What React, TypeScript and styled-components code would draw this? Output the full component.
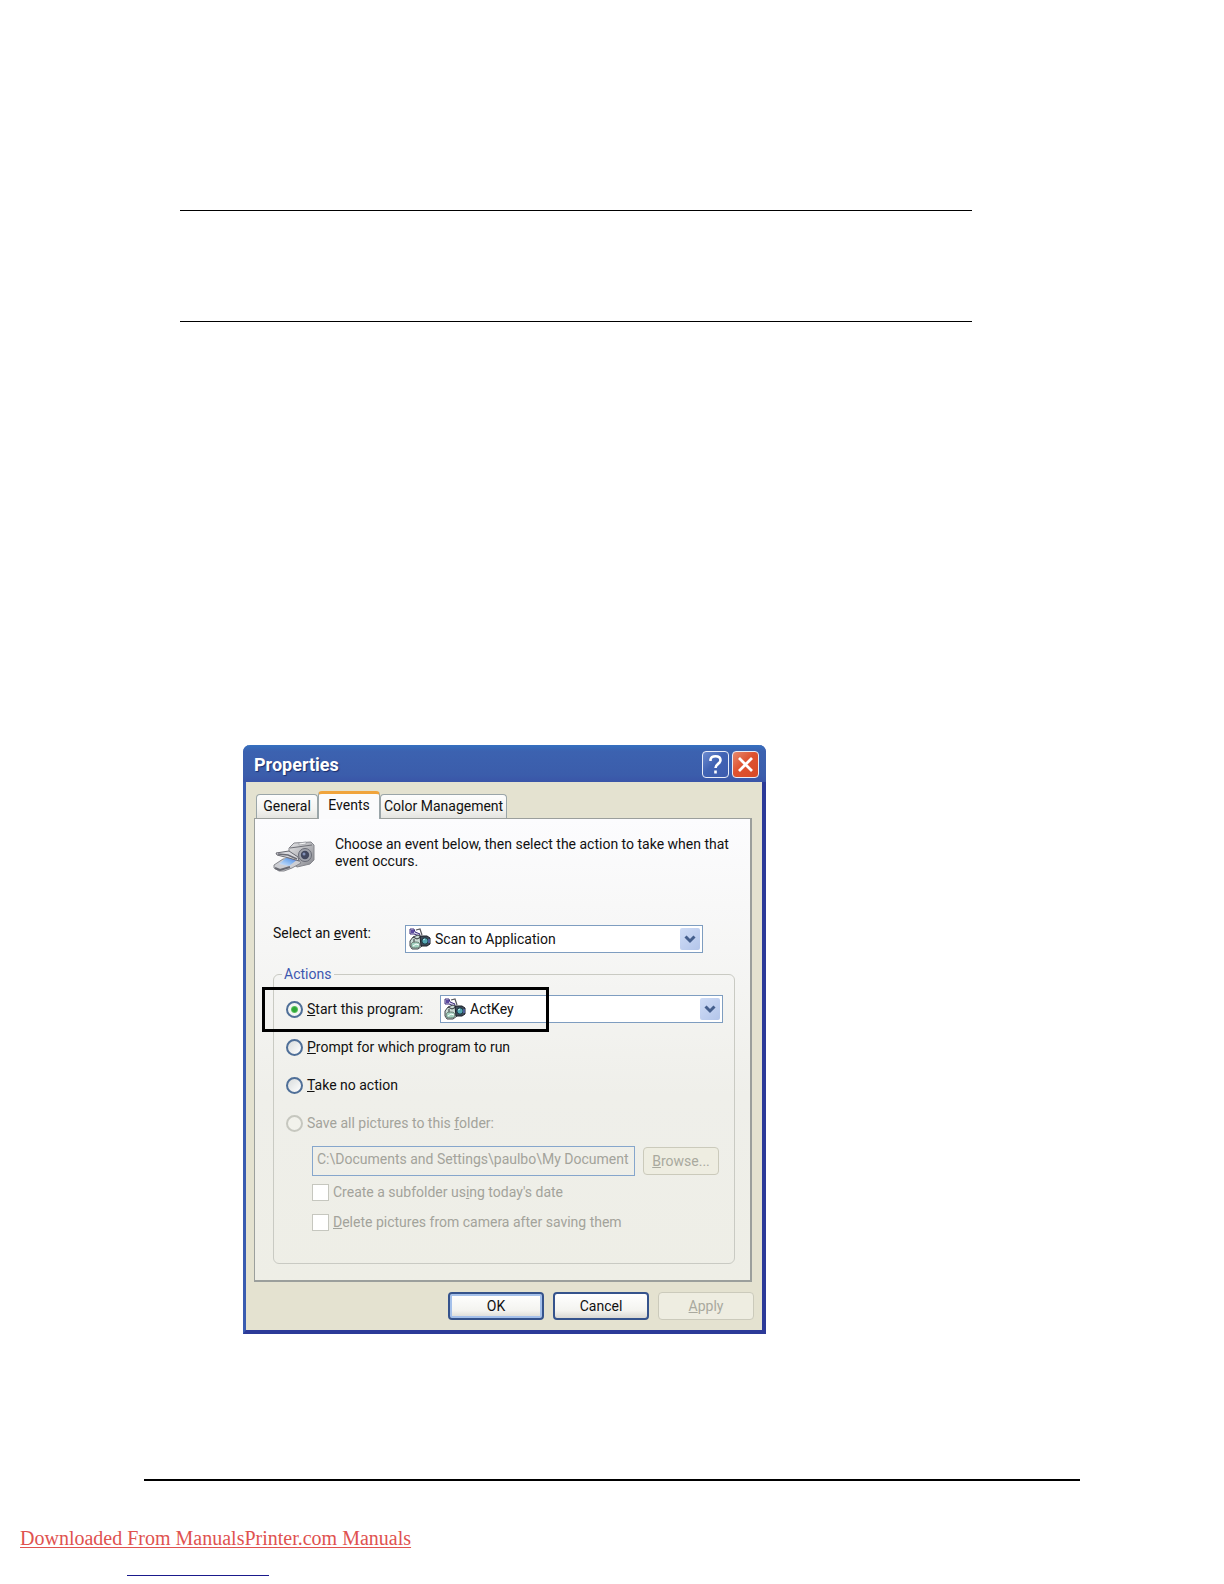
import React, { useState } from "react";
import styled, { createGlobalStyle, css } from "styled-components";

const GlobalStyle = createGlobalStyle`
  * { box-sizing: border-box; }
  body { margin: 0; background: #fff; }
  button, input, select { font: inherit; color: inherit; margin: 0; }
`;

const ui = `Roboto, "Liberation Sans", sans-serif`;

const Page = styled.main`
  display: flex;
  flex-direction: column;
  padding: 210px 0 8px;
  font-family: ${ui};
  font-size: 14px;
  line-height: 17px;
  color: #111;
`;

const NoteBox = styled.section`
  height: 112px;
  margin: 0 252px 0 180px;
  border-top: 1px solid #000;
  border-bottom: 1px solid #000;
`;

const Dialog = styled.section`
  width: 523px;
  max-width: 100%;
  margin: 423px 0 0 243px;
  border: solid #3a5cb0;
  border-width: 0 4px 4px 3px;
  border-right-color: #2c3a98;
  border-bottom-color: #2c3a98;
  border-radius: 7px 7px 0 0;
  background: #e4e2d0;
`;

const TitleBar = styled.header`
  display: flex;
  align-items: center;
  gap: 3px;
  height: 37px;
  margin: 0 -4px 0 -3px;
  padding: 2px 7px 0 11px;
  border-radius: 7px 7px 0 0;
  background: linear-gradient(#3570c0 0, #3c62b0 6px, #3b5dab 30px, #3a55a8 100%);
`;

const Title = styled.h1`
  flex: 1;
  margin: 0;
  font-size: 18px;
  line-height: 20px;
  font-weight: 700;
  color: #fff;
  text-shadow: 1px 1px 1px #1c2f6e;
`;

const CaptionButton = styled.button<{ $danger?: boolean }>`
  display: grid;
  place-items: center;
  width: 27px;
  height: 27px;
  padding: 0;
  border: 1px solid #e8ecf8;
  border-radius: 4px;
  background: ${(p) =>
    p.$danger
      ? "linear-gradient(135deg, #e58a70, #de5230 45%, #d84a26)"
      : "linear-gradient(135deg, #6d8cd0, #4163b4 45%, #3d5cae)"};
`;

const Body = styled.div`
  padding: 9px 10px 10px 8px;
`;

const TabList = styled.div`
  display: flex;
  align-items: flex-end;
  height: 27px;
  padding-left: 2px;
`;

const Tab = styled.button<{ $active?: boolean }>`
  height: 24px;
  min-width: 62px;
  padding: 0 3px;
  border: 1px solid #9aa5a8;
  border-bottom: 0;
  border-radius: 4px 4px 0 0;
  background: linear-gradient(#fdfdfd, #f4f4f1 60%, #e4e4e0);
  white-space: nowrap;
  ${(p) =>
    p.$active &&
    css`
      height: 28px;
      margin-bottom: -1px;
      padding-bottom: 3px;
      border-top: 3px solid #f0a43c;
      background: #fbfbfc;
      z-index: 1;
    `}
`;

const Panel = styled.div`
  padding: 17px 15px 16px 18px;
  border: 1px solid #9b9f9c;
  border-right-width: 2px;
  border-bottom-width: 2px;
  background: linear-gradient(#fcfcfe, #f6f6f5 28%, #efefea 60%, #eeeee6);
`;

const Intro = styled.div`
  display: flex;
  gap: 19px;
  height: 89px;
  > svg { margin-top: 5px; }
`;

const IntroText = styled.p`
  margin: 0;
  flex: 1;
`;

const EventRow = styled.div`
  display: flex;
  justify-content: space-between;
  height: 28px;
  margin-right: 32px;
`;

const PickerBox = styled.div<{ $width: number }>`
  display: grid;
  grid-template-columns: 27px 1fr 24px;
  align-items: center;
  width: ${(p) => p.$width}px;
  height: 28px;
  border: 1px solid #7e9dc0;
  background: #fff;
  > * { grid-row: 1; }
  > svg {
    grid-column: 1;
    margin-left: 3px;
    z-index: 1;
    pointer-events: none;
  }
`;

const PickerSelect = styled.select`
  grid-column: 1 / -1;
  width: 100%;
  height: 26px;
  padding: 1px 26px 0 29px;
  border: 0;
  background: transparent;
  appearance: none;
`;

const PickerArrow = styled.span`
  display: grid;
  place-items: center;
  grid-column: 3;
  width: 20px;
  height: 22px;
  margin-left: 2px;
  border-radius: 2px;
  background: linear-gradient(135deg, #cfdcf6, #b3c5ea);
  pointer-events: none;
`;

const Actions = styled.fieldset`
  min-width: 0;
  height: 298px;
  margin: 13px 0 0;
  padding: 0 11px 0 12px;
  border: 1px solid #c9cac3;
  border-radius: 6px;
`;

const Legend = styled.legend`
  height: 16px;
  padding: 0 3px 0 2px;
  margin-left: -4px;
  line-height: 16px;
  color: #3d57b0;
`;

const Row = styled.div`
  display: flex;
  align-items: center;
  justify-content: space-between;
  position: relative;
  height: 38px;
  &:first-of-type { margin-top: 8px; }
`;

const Highlight = styled.div`
  position: absolute;
  left: -24px;
  top: -3px;
  width: 287px;
  height: 45px;
  border: 3px solid #000;
  z-index: 2;
  pointer-events: none;
`;

const Choice = styled.label<{ $muted?: boolean }>`
  display: flex;
  align-items: center;
  gap: 4px;
  white-space: nowrap;
  color: ${(p) => (p.$muted ? "#a3a39b" : "inherit")};
`;

const Radio = styled.input`
  width: 17px;
  height: 17px;
  appearance: none;
  border: 2px solid #4f6f98;
  border-radius: 50%;
  background: linear-gradient(135deg, #d9dcdc, #fff);
  &:checked {
    background: radial-gradient(circle, #2fa838 0 2px, #58c05b 3px, #f3f6f3 4px);
  }
  &:disabled {
    border-color: #c6c7bf;
    background: #f2f2ec;
  }
`;

const Check = styled.input`
  width: 17px;
  height: 17px;
  appearance: none;
  border: 1px solid #c6c7bf;
  background: #fff;
`;

const SaveOptions = styled.div`
  display: flex;
  flex-direction: column;
  gap: 3px;
  padding: 4px 4px 0 26px;
`;

const FolderRow = styled.div`
  display: flex;
  align-items: center;
  gap: 8px;
`;

const FolderInput = styled.input`
  flex: 1;
  min-width: 0;
  height: 30px;
  padding: 0 4px 4px;
  border: 1px solid #86a6cc;
  background: transparent;
  color: #a3a39b;
`;

const CheckRow = styled.div`
  display: flex;
  align-items: center;
  height: 27px;
`;

const PushButton = styled.button<{ $width: number; $primary?: boolean }>`
  width: ${(p) => p.$width}px;
  height: 28px;
  padding: 0;
  border: 2px solid #35538c;
  border-radius: 4px;
  background: linear-gradient(#fff, #f3f3ef 70%, #d9d8d3);
  box-shadow: ${(p) => (p.$primary ? "inset 0 0 0 2px #a4c0ea" : "none")};
  &:disabled {
    border: 1px solid #cbcabb;
    background: #eeede1;
    color: #a9a99e;
  }
`;

const Buttons = styled.footer`
  display: flex;
  justify-content: flex-end;
  gap: 9px;
  margin-right: -2px;
  padding-top: 10px;
`;

const BottomRule = styled.hr`
  width: auto;
  height: 2px;
  margin: 145px 144px 0;
  border: 0;
  background: #000;
`;

const Source = styled.a`
  align-self: flex-start;
  margin: 45px 0 0 20px;
  font-family: "Liberation Serif", serif;
  font-size: 20px;
  line-height: 24px;
  color: #e0524f;
  text-decoration: underline;
  text-decoration-thickness: 1px;
  text-underline-offset: 2px;
`;

const LinkRule = styled.hr`
  width: 142px;
  height: 1px;
  margin: 25px 0 0 127px;
  border: 0;
  background: #1a1a8c;
`;

const ScannerCamera = () => (
  <svg width="43" height="34" viewBox="0 0 43 34" aria-hidden="true">
    <defs>
      <linearGradient id="metal" x1="0" y1="0" x2="1" y2="1">
        <stop offset="0" stopColor="#e6e6e8" />
        <stop offset="1" stopColor="#85868d" />
      </linearGradient>
      <linearGradient id="glass" x1="0" y1="1" x2="1" y2="0">
        <stop offset="0" stopColor="#dbe9fa" />
        <stop offset=".6" stopColor="#79aff0" />
        <stop offset="1" stopColor="#5a6fd0" />
      </linearGradient>
    </defs>
    <path d="M16 7l5-5 17-1 3 3v15l-4 4-13 3-8-6z" fill="url(#metal)" stroke="#85868c" />
    <path d="M17 7l22-3" fill="none" stroke="#6f7077" />
    <path d="M26 2l7-1v2l-7 1z" fill="#f7f7f7" stroke="#92939a" strokeWidth=".6" />
    <circle cx="32" cy="14" r="6.5" fill="#a2a5ae" stroke="#696b76" />
    <circle cx="32" cy="14" r="4.2" fill="#42485f" />
    <circle cx="31" cy="13" r="1.5" fill="#8190b7" />
    <path d="M1 24l9-6 14-1 4 5-9 5-8 3h-5l-5-3z" fill="#cdced3" stroke="#85868c" />
    <path d="M6 23l7-6 12 1-9 7z" fill="url(#glass)" />
    <path d="M3 12l13-2 9 6 1 4-10-3-12-3z" fill="#d9d9de" stroke="#696a72" />
    <path d="M5 13l10 1 9 4" fill="none" stroke="#6a6b74" strokeWidth="1.5" />
    <path d="M2 27l5 2 10-3" fill="none" stroke="#696a72" strokeWidth="2" />
  </svg>
);

const ProgramIcon = () => (
  <svg width="22" height="22" viewBox="0 0 22 22" aria-hidden="true">
    <path d="M1 1h4l1 3 5 2-1 2-5-2H1z" fill="#d9d5ef" stroke="#3b2c78" />
    <path d="M2 2h3v3H2z" fill="#5b49a0" />
    <path d="M7 2l4-1 1 3 1 3" fill="none" stroke="#55555b" strokeWidth="1.2" />
    <path d="M4 9l5-2 4 2v9l-4 3H3l-2-3v-5z" fill="#c9dad4" stroke="#41454b" />
    <path d="M4 9l4 2 4-2M5 11v4" fill="none" stroke="#2e3136" />
    <ellipse cx="6.5" cy="17" rx="4.5" ry="3" fill="#a3d2c0" stroke="#66776d" />
    <path d="M4 18l3-2 3 1" fill="none" stroke="#fff" />
    <path d="M11 8h7l3 2v6l-3 2h-6z" fill="#424b59" stroke="#1b2029" />
    <circle cx="16" cy="13" r="3.2" fill="#55a9b4" stroke="#18313c" />
    <path d="M14 12l2-1" stroke="#c3f1ee" />
    <path d="M20 11v4" stroke="#5869b3" strokeWidth="1.5" />
  </svg>
);

const Chevron = () => (
  <svg width="12" height="9" viewBox="0 0 12 9" aria-hidden="true">
    <path d="M1.5 1.5L6 6l4.5-4.5" fill="none" stroke="#455f8d" strokeWidth="3" />
  </svg>
);

function Picker({ id, label, value, width }: { id: string; label?: string; value: string; width: number }) {
  return (
    <PickerBox $width={width}>
      <ProgramIcon />
      <PickerSelect id={id} aria-label={label} defaultValue={value}>
        <option>{value}</option>
      </PickerSelect>
      <PickerArrow>
        <Chevron />
      </PickerArrow>
    </PickerBox>
  );
}

export default function App() {
  const [action, setAction] = useState("start");
  const radio = (value: string) => ({
    type: "radio",
    name: "action",
    checked: action === value,
    onChange: () => setAction(value),
  });

  return (
    <>
      <GlobalStyle />
      <Page>
        <NoteBox />
        <Dialog aria-labelledby="dialog-title">
          <TitleBar>
            <Title id="dialog-title">Properties</Title>
            <CaptionButton type="button" aria-label="Help">
              <svg width="19" height="21" viewBox="0 0 19 21" fill="none" stroke="#fff" strokeWidth="2.6">
                <path d="M4.5 7V5.5C5 3 7 2.3 9.5 2.3c3 0 5 1.4 5 4 0 3.5-5 3.7-5 7.7" />
                <path d="M9.5 16.5v3" />
              </svg>
            </CaptionButton>
            <CaptionButton type="button" aria-label="Close" $danger>
              <svg width="17" height="17" viewBox="0 0 17 17" fill="none" stroke="#fff" strokeWidth="2.8">
                <path d="M2 2l13 13M15 2L2 15" />
              </svg>
            </CaptionButton>
          </TitleBar>
          <Body>
            <TabList role="tablist">
              <Tab type="button" role="tab">General</Tab>
              <Tab type="button" role="tab" aria-selected="true" $active>Events</Tab>
              <Tab type="button" role="tab">Color Management</Tab>
            </TabList>
            <Panel role="tabpanel">
              <Intro>
                <ScannerCamera />
                <IntroText>
                  Choose an event below, then select the action to take when that
                  <br />
                  event occurs.
                </IntroText>
              </Intro>
              <EventRow>
                <label htmlFor="event">
                  Select an <u>e</u>vent:
                </label>
                <Picker id="event" value="Scan to Application" width={298} />
              </EventRow>
              <Actions>
                <Legend>Actions</Legend>
                <Row>
                  <Choice>
                    <Radio {...radio("start")} />
                    <span><u>S</u>tart this program:</span>
                  </Choice>
                  <Picker id="program" label="Program" value="ActKey" width={283} />
                  <Highlight />
                </Row>
                <Row>
                  <Choice>
                    <Radio {...radio("prompt")} />
                    <span><u>P</u>rompt for which program to run</span>
                  </Choice>
                </Row>
                <Row>
                  <Choice>
                    <Radio {...radio("none")} />
                    <span><u>T</u>ake no action</span>
                  </Choice>
                </Row>
                <Row>
                  <Choice $muted>
                    <Radio {...radio("save")} disabled />
                    <span>Save all pictures to this <u>f</u>older:</span>
                  </Choice>
                </Row>
                <SaveOptions>
                  <FolderRow>
                    <FolderInput
                      aria-label="Folder"
                      defaultValue="C:\Documents and Settings\paulbo\My Document"
                      disabled
                    />
                    <PushButton type="button" $width={76} disabled><u>B</u>rowse...</PushButton>
                  </FolderRow>
                  <CheckRow>
                    <Choice $muted>
                      <Check type="checkbox" disabled />
                      <span>Create a subfolder us<u>i</u>ng today's date</span>
                    </Choice>
                  </CheckRow>
                  <CheckRow>
                    <Choice $muted>
                      <Check type="checkbox" disabled />
                      <span><u>D</u>elete pictures from camera after saving them</span>
                    </Choice>
                  </CheckRow>
                </SaveOptions>
              </Actions>
            </Panel>
            <Buttons>
              <PushButton type="button" $width={96} $primary>OK</PushButton>
              <PushButton type="button" $width={96}>Cancel</PushButton>
              <PushButton type="button" $width={96} disabled><u>A</u>pply</PushButton>
            </Buttons>
          </Body>
        </Dialog>
        <BottomRule />
        <Source href="#manuals">Downloaded From ManualsPrinter.com Manuals</Source>
        <LinkRule />
      </Page>
    </>
  );
}
